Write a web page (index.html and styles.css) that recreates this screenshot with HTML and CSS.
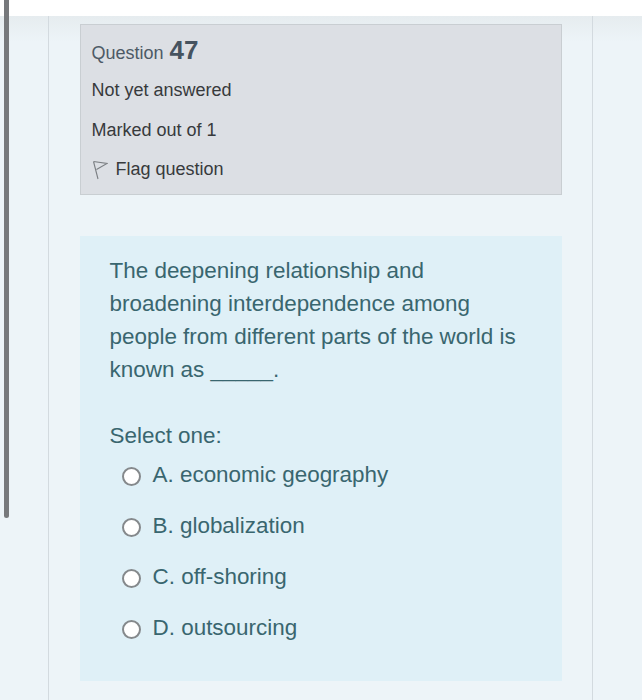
FILE: index.html
```html
<!DOCTYPE html>
<html lang="en">
<head>
<meta charset="utf-8">
<title>Question 47</title>
<link rel="stylesheet" href="styles.css">
</head>
<body>
<div class="scrollbar"></div>
<header class="topbar"></header>
<main class="page">
  <div class="column">
    <section class="info">
      <h3 class="qno">Question <span class="num">47</span></h3>
      <div class="state">Not yet answered</div>
      <div class="grade">Marked out of 1</div>
      <div class="flag">
        <svg class="flag-icon" width="16" height="20" viewBox="0 0 16 20" aria-hidden="true">
          <path d="M1.5 1.5 L15 3.5 L4.5 9.5 M1.5 1.5 L6 19" fill="none" stroke="#7b7f83" stroke-width="1.1"/>
        </svg>
        <span>Flag question</span>
      </div>
    </section>
    <section class="content">
      <p class="qtext">The deepening relationship and broadening interdependence among people from different parts of the world is known as _____.</p>
      <div class="prompt">Select one:</div>
      <div class="answers">
        <label class="answer"><span class="radio"></span><span>A. economic geography</span></label>
        <label class="answer"><span class="radio"></span><span>B. globalization</span></label>
        <label class="answer"><span class="radio"></span><span>C. off-shoring</span></label>
        <label class="answer"><span class="radio"></span><span>D. outsourcing</span></label>
      </div>
    </section>
  </div>
</main>
</body>
</html>
```
FILE: styles.css
```css
* { box-sizing: border-box; }
html, body { margin: 0; height: 700px; overflow: hidden; }
body {
  background: linear-gradient(#fff 16px, #e6ecef 16px, #edf4f8 42px);
  font-family: "Liberation Sans", Arial, sans-serif;
  position: relative;
}
.scrollbar {
  position: absolute;
  left: 4px;
  top: 0;
  width: 5px;
  height: 518px;
  background: #77797c;
  border-radius: 0 0 3px 3px;
  z-index: 2;
}
.topbar { height: 16px; background: #fff; }
.page {
  margin: 0 49px 0 48px;
  height: 684px;
  border-left: 1.5px solid #d3dadf;
  border-right: 1.5px solid #d3dadf;
  padding: 8px 30px 0 30.5px;
}
.column { display: flex; flex-direction: column; gap: 41px; }
.info {
  height: 171px;
  background: #dcdfe4;
  border: 1px solid #c9ced2;
  padding: 11px 11px 0;
  color: #373a3c;
  font-size: 18px;
}
.qno {
  margin: 0 0 11px;
  font-weight: 400;
  font-size: 18px;
  line-height: 29px;
  color: #4d5a66;
  word-spacing: 1px;
}
.num { font-size: 26px; font-weight: 700; color: #46535f; }
.state, .grade { line-height: 22px; margin-bottom: 18px; }
.flag { display: flex; align-items: center; gap: 8px; line-height: 22px; margin-top: -2px; }
.flag-icon { display: block; margin-top: 3px; }
.content {
  height: 445px;
  background: #dff0f7;
  padding: 18px 29px 0 30px;
  color: #39666f;
  font-size: 22.45px;
}
.qtext { margin: 0 0 33px; line-height: 33px; }
.prompt { line-height: 33px; }
.answers { display: flex; flex-direction: column; gap: 18px; padding: 6px 0 0 12px; }
.answer { display: flex; align-items: center; gap: 12px; line-height: 33px; }
.radio {
  width: 19px;
  height: 19px;
  border: 2.5px solid #85898c;
  border-radius: 50%;
  background: #fff;
  margin-top: 3px;
  flex: none;
}
```
